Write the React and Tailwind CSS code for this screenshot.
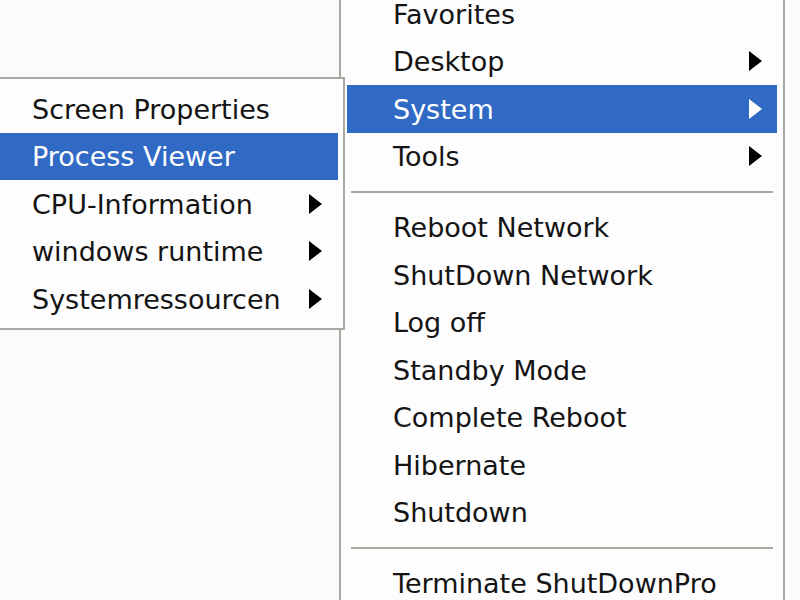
const mainItems = [
  { label: 'Favorites' },
  { label: 'Desktop', sub: true },
  { label: 'System', sub: true, active: true },
  { label: 'Tools', sub: true },
  { sep: true },
  { label: 'Reboot Network' },
  { label: 'ShutDown Network' },
  { label: 'Log off' },
  { label: 'Standby Mode' },
  { label: 'Complete Reboot' },
  { label: 'Hibernate' },
  { label: 'Shutdown' },
  { sep: true },
  { label: 'Terminate ShutDownPro' },
];

const subItems = [
  { label: 'Screen Properties' },
  { label: 'Process Viewer', active: true },
  { label: 'CPU-Information', sub: true },
  { label: 'windows runtime', sub: true },
  { label: 'Systemressourcen', sub: true },
];

function Arrow({ white }) {
  return (
    <svg width="13" height="20" viewBox="0 0 13 20" className="shrink-0">
      <polygon points="0,0 13,10 0,20" fill={white ? '#ffffff' : '#000000'} />
    </svg>
  );
}

function Row({ item, textPad, arrowPad }) {
  return (
    <div
      className={`h-[47.5px] flex items-center justify-between ${textPad} ${arrowPad} ${
        item.active ? 'bg-[#316ac5] text-white' : 'text-[#141414]'
      }`}
    >
      <span className="pt-[1px]">{item.label}</span>
      {item.sub && <Arrow white={item.active} />}
    </div>
  );
}

export default function App() {
  return (
    <div
      className="relative w-[800px] h-[600px] overflow-hidden bg-[#fbfbfb] text-[27px] leading-none"
      style={{ fontFamily: '"DejaVu Sans", Verdana, sans-serif' }}
    >
      {/* main menu */}
      <div className="ml-[339px] mt-[-10px] w-[446px] border-x-2 border-[#a9a8a2] bg-[#fdfdfd] pl-[6px] pr-[6px]">
        {mainItems.map((item, i) =>
          item.sep ? (
            <div key={i} className="h-[23.5px] flex items-center px-[4px]">
              <div className="h-[2px] w-full bg-[#a9a79d]" />
            </div>
          ) : (
            <Row key={i} item={item} textPad="pl-[46px]" arrowPad="pr-[15px]" />
          )
        )}
      </div>

      {/* System submenu */}
      <div className="absolute left-0 top-[77px] w-[345px] border-y-2 border-r-2 border-[#a9a8a2] bg-[#fdfdfd] pt-[6px] pb-[5px] pr-[5px]">
        {subItems.map((item, i) => (
          <Row key={i} item={item} textPad="pl-[32px]" arrowPad="pr-[16px]" />
        ))}
      </div>
    </div>
  );
}
